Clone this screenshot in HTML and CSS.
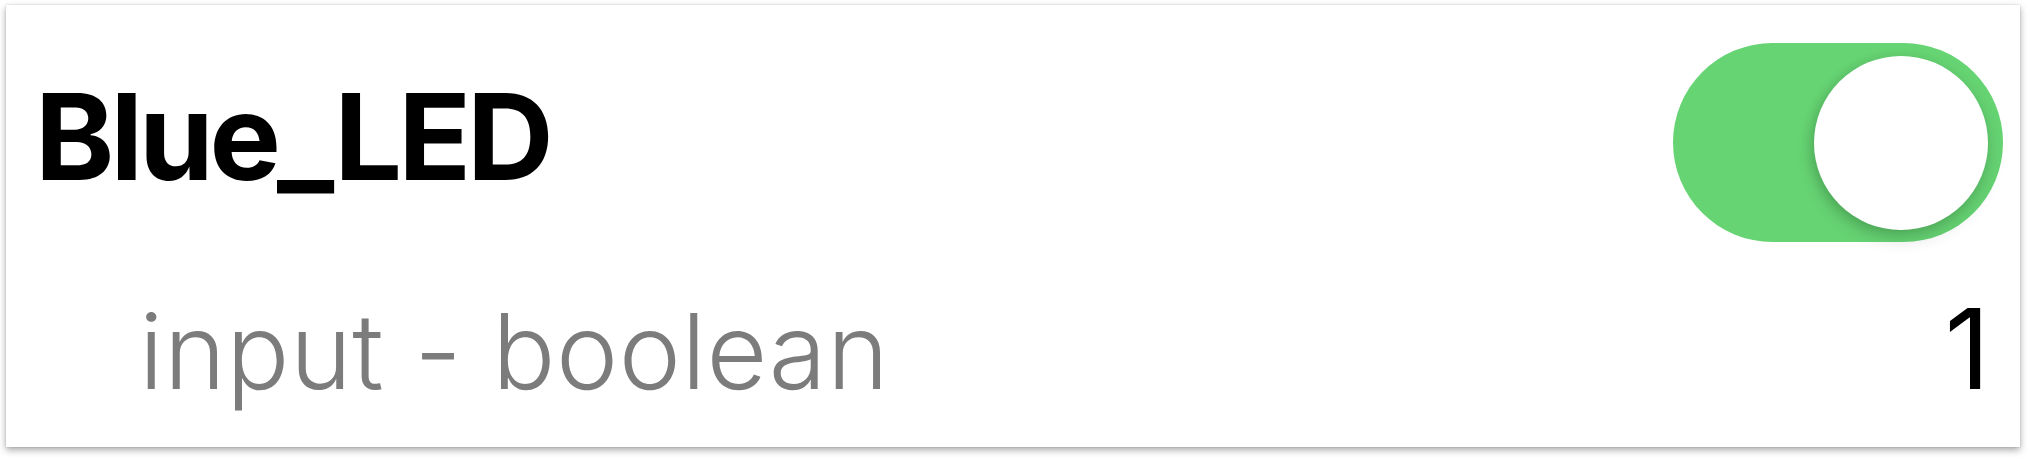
FILE: index.html
```html
<!DOCTYPE html>
<html lang="en">
<head>
<meta charset="utf-8">
<title>Blue_LED</title>
<link rel="stylesheet" href="styles.css">
</head>
<body>
  <div class="card">
    <div class="row head">
      <div class="title">Blue_LED</div>
      <div class="toggle on" role="switch" aria-checked="true">
        <div class="thumb"></div>
      </div>
    </div>
    <div class="row detail">
      <div class="sub">input - boolean</div>
      <div class="value">1</div>
    </div>
  </div>
</body>
</html>
```
FILE: styles.css
```css
html, body {
  margin: 0;
  padding: 0;
  background: #ffffff;
}

body {
  width: 2030px;
  height: 462px;
  overflow: hidden;
  font-family: Inter, "Liberation Sans", Arial, sans-serif;
}

.card {
  box-sizing: border-box;
  margin: 5px 0 0 6px;
  width: 2014px;
  height: 442px;
  background: #ffffff;
  box-shadow: 0 3px 7px rgba(0, 0, 0, 0.35), 0 0 1px rgba(0, 0, 0, 0.25);
  padding: 38px 17px 0 29px;
  display: flex;
  flex-direction: column;
}

.row {
  display: flex;
  justify-content: space-between;
}

.head {
  align-items: center;
  height: 199px;
}

.title {
  font-weight: 700;
  font-size: 120px;
  line-height: 1;
  letter-spacing: -4px;
  color: #000000;
  margin-bottom: 12px;
}

.toggle {
  position: relative;
  width: 330px;
  height: 199px;
  border-radius: 100px;
  background: #66d473;
  flex: none;
}

.thumb {
  position: absolute;
  top: 13px;
  right: 15px;
  width: 174px;
  height: 174px;
  border-radius: 50%;
  background: #ffffff;
  box-shadow: 0 8px 18px rgba(0, 0, 0, 0.16), -4px 2px 10px rgba(0, 60, 0, 0.12);
}

.detail {
  align-items: baseline;
  margin-top: 51px;
  padding-left: 104px;
  padding-right: 13px;
}

.sub {
  font-size: 105px;
  font-weight: 340;
  line-height: 1;
  letter-spacing: 0.5px;
  color: #7c7c7c;
}

.value {
  font-size: 111px;
  font-weight: 400;
  line-height: 1;
  color: #000000;
}
```
